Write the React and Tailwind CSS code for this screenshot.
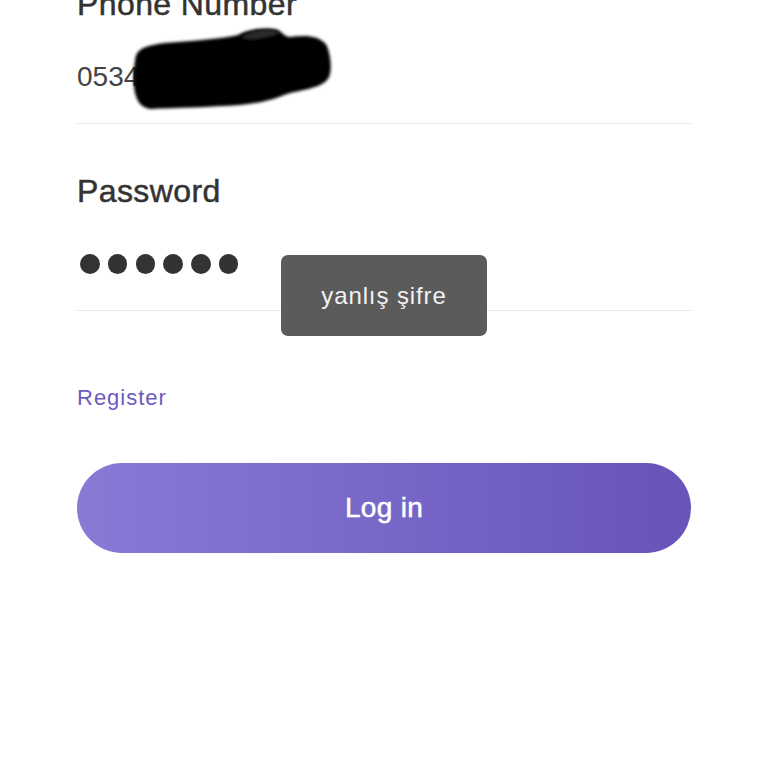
export default function App() {
  const dots = [0, 1, 2, 3, 4, 5];

  return (
    <div
      className="relative h-[768px] w-full overflow-hidden bg-white"
      style={{ fontFamily: '"Liberation Sans", Arial, sans-serif' }}
    >
      <div className="-mt-[12px] px-[77px]">
        {/* Phone number */}
        <div className="text-[32px] leading-[33px] tracking-[0.4px] text-[#333333] [-webkit-text-stroke:0.5px_#333333]">
          Phone Number
        </div>
        <div className="relative mt-[42px] h-[28px] text-[28px] leading-[28px] text-[#444444]">
          0534
          {/* redaction scribble */}
          <svg
            className="absolute left-[53px] -top-[38px]"
            width="206"
            height="88"
            viewBox="0 0 206 88"
          >
            <defs>
              <filter id="soft" x="-10%" y="-10%" width="120%" height="120%">
                <feGaussianBlur stdDeviation="1.6" />
              </filter>
            </defs>
            <path
              d="M5 36 C6 26 10 21 35 18 C60 16 90 14 108 10 C118 4 135 2 148 5 C153 8 155 12 160 12 C175 10 190 10 197 21 C201 32 202 45 199 52 C195 60 185 63 160 68 C148 72 140 77 110 80 C80 82 45 83 20 84 C10 82 6 76 4 62 C3 50 4 42 5 36 Z"
              fill="#000000"
              filter="url(#soft)"
            />
            <path
              d="M112 12 C122 5 136 3 148 6 C150 10 140 12 128 14 C120 15 114 15 112 12 Z"
              fill="#2a2a2a"
              filter="url(#soft)"
            />
          </svg>
        </div>
        <div className="mt-[32px] h-px bg-[#e6e6e6]" />

        {/* Password */}
        <div className="mt-[51px] text-[32px] leading-[33px] tracking-[0.4px] text-[#333333] [-webkit-text-stroke:0.5px_#333333]">
          Password
        </div>
        <div className="mt-[45px] ml-[3px] flex h-[22px] items-center gap-[8.3px]">
          {dots.map((d) => (
            <span key={d} className="h-[19.5px] w-[19.5px] rounded-full bg-[#333333]" />
          ))}
        </div>
        <div className="mt-[35px] h-px bg-[#e6e6e6]" />

        {/* Register link */}
        <div className="mt-[76px] text-[22px] leading-[22px] tracking-[1px] text-[#6e5bbf]">Register</div>

        {/* Login button */}
        <button className="mt-[54px] flex h-[90px] w-full items-center justify-center rounded-full bg-gradient-to-r from-[#877bd6] to-[#6853b8] text-[28px] tracking-[0.3px] text-white [-webkit-text-stroke:0.5px_#ffffff]">
          Log in
        </button>
      </div>

      {/* toast */}
      <div className="absolute left-1/2 top-[255px] flex h-[81px] w-[206px] -translate-x-1/2 items-center justify-center rounded-[7px] bg-[#5b5b5b] text-[24px] tracking-[0.9px] text-[#f2f2f2]">
        yanlış şifre
      </div>
    </div>
  );
}
